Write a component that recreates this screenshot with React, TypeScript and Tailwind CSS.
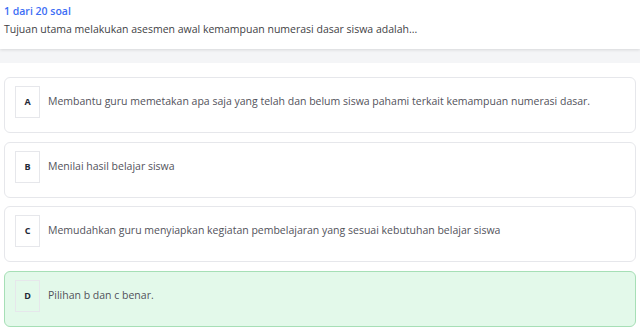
const options = [
  { key: "A", text: "Membantu guru memetakan apa saja yang telah dan belum siswa pahami terkait kemampuan numerasi dasar." },
  { key: "B", text: "Menilai hasil belajar siswa" },
  { key: "C", text: "Memudahkan guru menyiapkan kegiatan pembelajaran yang sesuai kebutuhan belajar siswa" },
  { key: "D", text: "Pilihan b dan c benar.", correct: true },
];

export default function App() {
  return (
    <div className="w-[640px] h-[332px] bg-white font-['Open_Sans',sans-serif] overflow-hidden">
      <div className="h-[49px] px-1 pt-[4px] bg-white relative z-10 shadow-[0_1px_3px_rgba(0,0,0,0.12)]">
        <div className="text-[10.5px] leading-[14px] font-semibold text-[#3d6ef5]">1 dari 20 soal</div>
        <div className="mt-[4px] text-[10.5px] leading-[14px] text-[#3f3f46]">
          Tujuan utama melakukan asesmen awal kemampuan numerasi dasar siswa adalah...
        </div>
      </div>
      <div className="h-[14px] bg-[#f4f5f7]" />
      <div className="flex flex-col gap-[8.5px] px-1 pt-[14px]">
        {options.map((o) => (
          <div
            key={o.key}
            className={
              o.correct
                ? "h-[56px] rounded-[6px] border border-[#a6dfb6] bg-[#e3f9ea] pl-[10px] pt-[8px]"
                : "h-[56px] rounded-[6px] border border-[#e6e7eb] bg-white pl-[10px] pt-[8px]"
            }
          >
            <div className="flex items-center gap-[8px]">
              <div className="w-[25px] h-[32px] border border-[#e6e7eb] flex items-center justify-center text-[9px] font-bold text-[#1f2937]">
                {o.key}
              </div>
              <div className="text-[10.5px] text-[#52525b]">{o.text}</div>
            </div>
          </div>
        ))}
      </div>
    </div>
  );
}
